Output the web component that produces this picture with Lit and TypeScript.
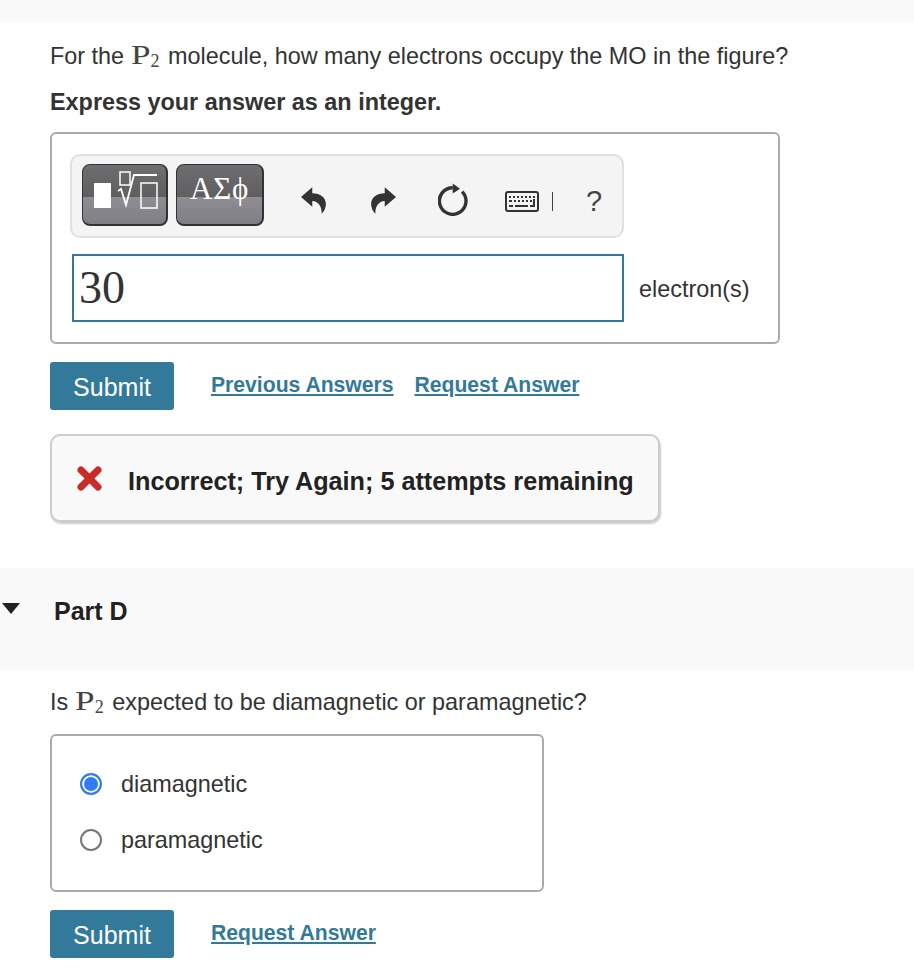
import { LitElement, html, css, svg } from 'lit';
import { customElement } from 'lit/decorators.js';

const arrowShape = svg`<path d="M0 10 L11.5 0 L11.5 6 C21 6 27 12 25 20 C24.5 23 23 25.5 21 27 C21.5 20 18 14.5 11.5 14 L11.5 20 Z" />`;

@customElement('app-root')
export class AppRoot extends LitElement {
  static styles = css`
    :host {
      display: block;
      width: 914px;
      height: 978px;
      overflow: hidden;
      background: #fff;
      color: #333;
      font-family: 'Liberation Sans', Arial, sans-serif;
      font-size: 23.4px;
    }

    .band-top {
      height: 22px;
      background: #f9f9f9;
    }

    .section {
      padding: 0 50px;
    }

    .question {
      height: 34px;
      margin-top: 17px;
      line-height: 34px;
      white-space: nowrap;
    }

    .math {
      display: inline-block;
      margin-right: 2px;
      color: #444;
      font-family: 'Liberation Serif', serif;
      font-size: 27px;
      line-height: 20px;
    }

    .math .letter {
      display: inline-block;
      width: 20px;
      transform: scaleX(1.3);
      transform-origin: left;
    }

    .math sub {
      font-size: 18px;
      line-height: 0;
      vertical-align: -3px;
    }

    .hint {
      height: 34px;
      margin-top: 12px;
      line-height: 34px;
      font-weight: 700;
    }

    .answer-box {
      box-sizing: border-box;
      width: 730px;
      height: 212px;
      margin-top: 13px;
      padding: 20px 18px 0;
      border: 2px solid #aaa;
      border-radius: 6px;
    }

    .toolbar {
      box-sizing: border-box;
      display: flex;
      align-items: center;
      width: 554px;
      height: 84px;
      padding-left: 10px;
      background: #f4f4f4;
      border: 2px solid #e0e0e0;
      border-radius: 10px;
    }

    .tool-btn {
      box-sizing: border-box;
      display: flex;
      align-items: center;
      justify-content: center;
      height: 62px;
      margin-bottom: 2px;
      border: 1px solid #333;
      border-bottom-width: 2px;
      border-right-width: 2px;
      border-radius: 8px;
      color: #fff;
      background: linear-gradient(#6e6e70, #5f5f60 54%, #8f8e94 54%, #7f7e84);
    }

    .templates {
      width: 86px;
    }

    .templates svg {
      display: block;
    }

    .symbols {
      width: 88px;
      margin-left: 8px;
      padding-bottom: 11px;
      font-family: 'Liberation Serif', serif;
      font-size: 31px;
      line-height: 36px;
      letter-spacing: 0.7px;
    }

    .icon {
      display: block;
      flex: none;
      margin-top: 8px;
      fill: #333;
    }

    .undo {
      margin-left: 37px;
    }

    .redo {
      margin-left: 45px;
      transform: scaleX(-1);
    }

    .reset {
      margin-left: 42px;
      margin-top: 6px;
    }

    .keys {
      margin-left: 37px;
      margin-top: 11px;
    }

    .sep {
      width: 1px;
      height: 19px;
      margin: 11px 0 0 13px;
      background: #444;
    }

    .help {
      margin: 9px 0 0 33px;
      font-size: 29px;
      line-height: 36px;
      color: #444;
    }

    .entry {
      display: flex;
      align-items: center;
      margin-top: 16px;
    }

    .input {
      box-sizing: border-box;
      width: 552px;
      height: 68px;
      margin-left: 2px;
      padding-left: 5px;
      border: 2px solid #337a99;
      font-family: 'Liberation Serif', serif;
      font-size: 46px;
      line-height: 64px;
    }

    .unit {
      margin: 2px 0 0 15px;
    }

    .actions {
      display: flex;
      align-items: center;
      margin-top: 18px;
    }

    .submit {
      box-sizing: border-box;
      display: flex;
      align-items: center;
      justify-content: center;
      width: 124px;
      height: 48px;
      padding-top: 2px;
      border-radius: 3px;
      background: #337a9a;
      color: #fff;
      font-size: 25px;
    }

    .link {
      margin-bottom: 3px;
      color: #337a9a;
      font-size: 21.15px;
      font-weight: 700;
      text-decoration: underline;
    }

    .link.first {
      margin-left: 37px;
    }

    .link.second {
      margin-left: 21px;
    }

    .alert {
      box-sizing: border-box;
      display: flex;
      align-items: center;
      width: 610px;
      height: 88px;
      margin-top: 24px;
      padding-left: 25px;
      background: #f9f9f9;
      border: 2px solid #ccc;
      border-radius: 10px;
      box-shadow: 1px 2px 2px #ccc;
      color: #222;
      font-size: 25.2px;
      font-weight: 700;
    }

    .alert svg {
      flex: none;
      margin-right: 26px;
    }

    .alert span {
      margin-top: 6px;
    }

    .part {
      box-sizing: border-box;
      position: relative;
      display: flex;
      align-items: center;
      height: 102px;
      margin-top: 46px;
      padding: 0 0 16px 54px;
      background: #f9f9f9;
      color: #222;
      font-size: 25px;
      font-weight: 700;
    }

    .caret {
      position: absolute;
      left: 2px;
      top: 35px;
    }

    .question.lower {
      margin-top: 15px;
    }

    .choices {
      box-sizing: border-box;
      width: 494px;
      height: 158px;
      margin-top: 15px;
      padding: 20px 0 0 28px;
      border: 2px solid #aaa;
      border-radius: 6px;
    }

    .choice {
      display: flex;
      align-items: center;
      height: 56px;
    }

    .radio {
      box-sizing: border-box;
      flex: none;
      width: 22px;
      height: 22px;
      margin-right: 19px;
      border: 2px solid #767676;
      border-radius: 50%;
      background: #fff;
    }

    .radio.on {
      border-color: #2f7bf6;
      background: #2f7bf6;
      box-shadow: inset 0 0 0 2px #fff;
    }
  `;

  render() {
    return html`
      <div class="band-top"></div>
      <div class="section">
        <div class="question">
          For the <span class="math"><span class="letter">P</span><sub>2</sub></span> molecule, how many electrons occupy the MO in the figure?
        </div>
        <div class="hint">Express your answer as an integer.</div>
        <div class="answer-box">
          <div class="toolbar">
            <div class="tool-btn templates">
              <svg width="83" height="59" viewBox="0 0 83 59">
                <rect x="11" y="18" width="17" height="25" fill="#fff" />
                <g fill="none" stroke="#fff" stroke-width="1.5">
                  <rect x="37" y="7" width="10" height="13" />
                  <path d="M35 26 L38 24 L43 40 L51 10 L74 10" stroke-width="1.8" />
                  <rect x="58" y="18" width="16" height="25" />
                </g>
              </svg>
            </div>
            <div class="tool-btn symbols">ΑΣϕ</div>
            <svg class="icon undo" width="25" height="27" viewBox="0 0 25.5 27">${arrowShape}</svg>
            <svg class="icon redo" width="25" height="27" viewBox="0 0 25.5 27">${arrowShape}</svg>
            <svg class="icon reset" width="30" height="33" viewBox="0 0 30 33">
              <path d="M24.1 8.6 A13.3 13.3 0 1 1 14.7 4.7" fill="none" stroke="#333" stroke-width="3.4" />
              <path d="M14.7 0.5 L22 5.7 L14.7 10.5 Z" />
            </svg>
            <svg class="icon keys" width="34" height="21" viewBox="0 0 34 21">
              <rect x="1" y="1" width="32" height="19" rx="2" fill="#f4f4f4" stroke="#333" stroke-width="2" />
              <path d="M4 6h2M8 6h2M12 6h2M16 6h2M20 6h2M24 6h2M28 6h2M4 10h3M9 10h2M13 10h2M17 10h2M21 10h2M25 10h2M4 15h4M10 15h13M25 15h5M29 8v7" stroke="#333" stroke-width="2" fill="none" />
            </svg>
            <div class="sep"></div>
            <div class="help">?</div>
          </div>
          <div class="entry">
            <div class="input">30</div>
            <div class="unit">electron(s)</div>
          </div>
        </div>
        <div class="actions">
          <div class="submit">Submit</div>
          <a class="link first">Previous Answers</a>
          <a class="link second">Request Answer</a>
        </div>
        <div class="alert">
          <svg width="25" height="25" viewBox="0 0 25 25"><path d="M4 4 L21 21 M21 4 L4 21" fill="none" stroke="#c92a2a" stroke-width="7" stroke-linecap="round" /></svg>
          <span>Incorrect; Try Again; 5 attempts remaining</span>
        </div>
      </div>
      <div class="part">
        <svg class="caret" width="18" height="11" viewBox="0 0 18 11"><path d="M0 0 H18 L9 11 Z" fill="#222" /></svg>
        Part D
      </div>
      <div class="section">
        <div class="question lower">
          Is <span class="math"><span class="letter">P</span><sub>2</sub></span> expected to be diamagnetic or paramagnetic?
        </div>
        <div class="choices">
          <div class="choice"><span class="radio on"></span>diamagnetic</div>
          <div class="choice"><span class="radio"></span>paramagnetic</div>
        </div>
        <div class="actions">
          <div class="submit">Submit</div>
          <a class="link first">Request Answer</a>
        </div>
      </div>
    `;
  }
}
